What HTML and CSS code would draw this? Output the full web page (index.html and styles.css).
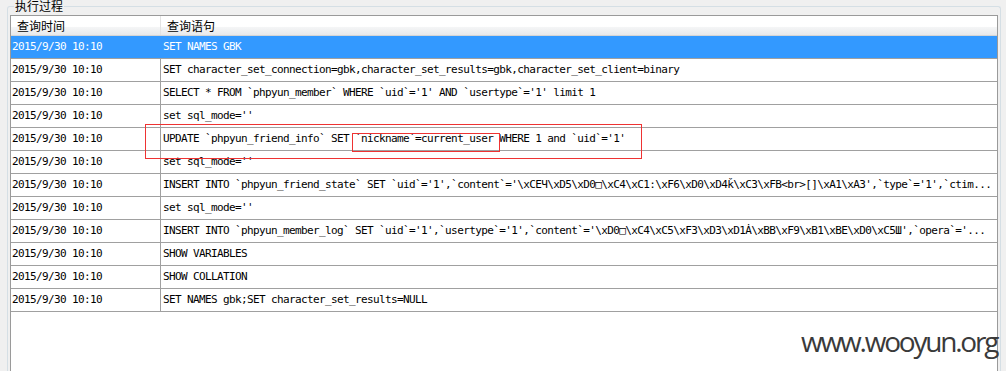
FILE: index.html
```html
<!DOCTYPE html>
<html lang="zh-CN">
<head>
    <meta charset="UTF-8">
    <title>执行过程</title>
    <link rel="stylesheet" href="styles.css">
</head>
<body>
    <!-- Group box: query log -->
    <div class="group">
        <span class="group-title">执行过程</span>
        <div class="grid">
            <div class="grid-head">
                <div class="cell c-time">查询时间</div>
                <div class="cell c-sql">查询语句</div>
            </div>
            <div class="row selected">
                <div class="cell c-time">2015/9/30 10:10</div>
                <div class="cell c-sql">SET NAMES GBK</div>
            </div>
            <div class="row">
                <div class="cell c-time">2015/9/30 10:10</div>
                <div class="cell c-sql">SET character_set_connection=gbk,character_set_results=gbk,character_set_client=binary</div>
            </div>
            <div class="row">
                <div class="cell c-time">2015/9/30 10:10</div>
                <div class="cell c-sql">SELECT * FROM `phpyun_member` WHERE `uid`='1' AND `usertype`='1' limit 1</div>
            </div>
            <div class="row">
                <div class="cell c-time">2015/9/30 10:10</div>
                <div class="cell c-sql">set sql_mode=''</div>
            </div>
            <div class="row">
                <div class="cell c-time">2015/9/30 10:10</div>
                <div class="cell c-sql">UPDATE `phpyun_friend_info` SET `nickname`=current_user WHERE 1 and `uid`='1'</div>
            </div>
            <div class="row">
                <div class="cell c-time">2015/9/30 10:10</div>
                <div class="cell c-sql">set sql_mode=''</div>
            </div>
            <div class="row">
                <div class="cell c-time">2015/9/30 10:10</div>
                <div class="cell c-sql">INSERT INTO `phpyun_friend_state` SET `uid`='1',`content`='\xCEЧ\xD5\xD0□\xC4\xC1:\xF6\xD0\xD4ǩ\xC3\xFB&lt;br&gt;[]\xA1\xA3',`type`='1',`ctim...</div>
            </div>
            <div class="row">
                <div class="cell c-time">2015/9/30 10:10</div>
                <div class="cell c-sql">set sql_mode=''</div>
            </div>
            <div class="row">
                <div class="cell c-time">2015/9/30 10:10</div>
                <div class="cell c-sql">INSERT INTO `phpyun_member_log` SET `uid`='1',`usertype`='1',`content`='\xD0□\xC4\xC5\xF3\xD3\xD1Ȧ\xBB\xF9\xB1\xBE\xD0\xC5Ш',`opera`='...</div>
            </div>
            <div class="row">
                <div class="cell c-time">2015/9/30 10:10</div>
                <div class="cell c-sql">SHOW VARIABLES</div>
            </div>
            <div class="row">
                <div class="cell c-time">2015/9/30 10:10</div>
                <div class="cell c-sql">SHOW COLLATION</div>
            </div>
            <div class="row">
                <div class="cell c-time">2015/9/30 10:10</div>
                <div class="cell c-sql">SET NAMES gbk;SET character_set_results=NULL</div>
            </div>
        </div>
    </div>

    <!-- Annotation boxes drawn over the grid -->
    <div class="mark mark-outer"></div>
    <div class="mark mark-inner"></div>

    <div class="watermark">www.wooyun.org</div>
</body>
</html>
```

FILE: styles.css
```css
html, body {
    margin: 0;
    padding: 0;
    height: 100%;
}

body {
    background-color: #f0f0f0;
    color: #000000;
    overflow: hidden;
    position: relative;
    font-family: "DejaVu Sans Mono", monospace;
    font-size: 11px;
}

.group {
    position: relative;
    margin: 6px 5px 0 7px;
    padding: 8px 2px 0 2px;
    height: 356px;
    border: 1px solid #d5dfe5;
    border-bottom: none;
    border-radius: 3px 3px 0 0;
}

.group-title {
    position: absolute;
    left: 6px;
    top: -7px;
    padding: 0 1px;
    background-color: #f0f0f0;
    font-family: "Noto Sans CJK SC", sans-serif;
    font-size: 12px;
    line-height: 12px;
}

.grid {
    height: 100%;
    overflow: hidden;
    background-color: #ffffff;
    border: 1px solid #9a9a9a;
    border-bottom: none;
    box-sizing: border-box;
}

.grid-head {
    display: flex;
    height: 19px;
    border-bottom: 1px solid #d5d5d5;
    background: linear-gradient(#ffffff 0%, #ffffff 55%, #f4f5f6 60%, #e8e9eb 100%);
    font-family: "Noto Sans CJK SC", sans-serif;
    font-size: 12px;
}

.grid-head .cell {
    line-height: 19px;
    padding-left: 6px;
    letter-spacing: 0;
}

.grid-head .c-time {
    border-right-color: #e3e3e3;
}

.row {
    display: flex;
    height: 22px;
    border-bottom: 1px solid #a0a0a0;
}

.cell {
    line-height: 22px;
    white-space: nowrap;
    overflow: hidden;
    letter-spacing: -0.62px;
}

.c-time {
    flex: none;
    width: 150px;
    box-sizing: border-box;
    padding-left: 1px;
    border-right: 1px solid #a0a0a0;
}

.c-sql {
    flex: 1;
    min-width: 0;
    padding-left: 2px;
}

.selected {
    background-color: #3399ff;
    color: #ffffff;
}

.selected .c-time {
    border-right-color: #3399ff;
}

.mark {
    position: absolute;
    border: 1px solid #ee3333;
}

.mark-outer {
    left: 145px;
    top: 124px;
    width: 495px;
    height: 33px;
}

.mark-inner {
    left: 352px;
    top: 133px;
    width: 146px;
    height: 17px;
}

.watermark {
    position: absolute;
    left: 801px;
    top: 327px;
    font-family: "Open Sans", sans-serif;
    font-size: 28px;
    line-height: 28px;
    letter-spacing: -2.2px;
    color: #3a3a3a;
}
```
